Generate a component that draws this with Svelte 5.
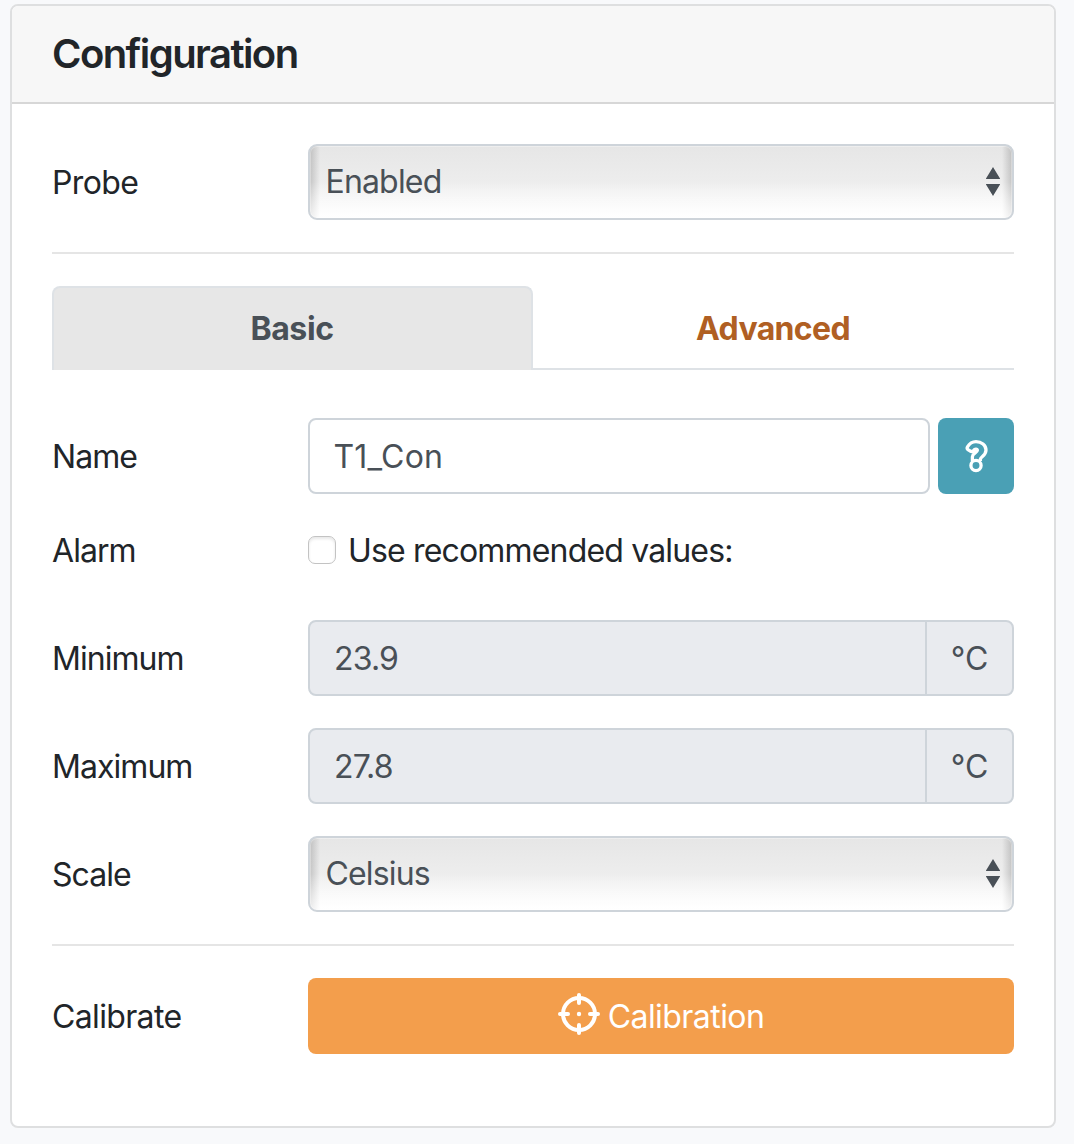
<script>
  let recommended = $state(false);
  let tab = $state('Basic');
  const limits = [
    { label: 'Minimum', value: '23.9' },
    { label: 'Maximum', value: '27.8' }
  ];
</script>

{#snippet picker(value)}
  <button class="select">
    <span>{value}</span>
    <svg class="arrows" viewBox="0 0 14 29" width="14" height="29" aria-hidden="true">
      <path d="M7 0 14.3 12H-.3zM-.3 17h14.6L7 29z" fill="#495057" />
    </svg>
  </button>
{/snippet}

<main class="page">
  <section class="card">
    <header><h1>Configuration</h1></header>
    <div class="body">
      <div class="row">
        <span class="label">Probe</span>
        {@render picker('Enabled')}
      </div>
      <hr />
      <nav class="tabs">
        {#each ['Basic', 'Advanced'] as name}
          <button class="tab" class:active={tab === name} onclick={() => (tab = name)}>{name}</button>
        {/each}
      </nav>
      <div class="row name">
        <span class="label tight">Name</span>
        <div class="field">T1_Con</div>
        <button class="help" aria-label="Help">
          <svg viewBox="0 0 24 34" width="24" height="34" fill="none" stroke="#fff" stroke-width="3.3" stroke-linejoin="round">
            <path d="M8.4 22V17.8C8.4 14.4 13.4 13.2 13.4 11.2C13.4 9.6 10.8 9.9 9.4 11.6Q8 13 6.4 12.2L3.9 10.6Q2.6 9.3 3.5 7.8C5.6 4.2 8.4 2.6 12 2.6C17.4 2.6 22 6.2 22 11C22 16.6 16.8 17.4 16.4 20V22" />
            <circle cx="12" cy="26.5" r="5.1" />
          </svg>
        </button>
      </div>
      <div class="row alarm">
        <span class="label tight">Alarm</span>
        <label class="check"><input type="checkbox" bind:checked={recommended} /><span>Use recommended values:</span></label>
      </div>
      {#each limits as item}
        <div class="row limit">
          <span class="label tight">{item.label}</span>
          <div class="group">
            <div class="value">{item.value}</div>
            <div class="unit">°C</div>
          </div>
        </div>
      {/each}
      <div class="row">
        <span class="label tight">Scale</span>
        {@render picker('Celsius')}
      </div>
      <hr />
      <div class="row">
        <span class="label">Calibrate</span>
        <button class="calibrate">
          <svg viewBox="0 0 42 42" width="42" height="42" fill="none" stroke="#fff" stroke-width="4" aria-hidden="true">
            <circle cx="21" cy="21" r="16" />
            <path d="M21 2v8M21 32v8M2 21h8M32 21h8" stroke-linecap="round" />
            <circle cx="21" cy="21" r="2.2" fill="#fff" stroke="none" />
          </svg>
          <span>Calibration</span>
        </button>
      </div>
    </div>
  </section>
</main>

<style>
  :global(body) {
    background: #f8f9fb;
  }
  .page {
    box-sizing: border-box;
    height: 1144px;
    padding: 4px 18px 16px 10px;
    font-family: Inter, sans-serif;
    font-size: 32px;
    line-height: 48px;
    letter-spacing: -0.83px;
    color: #212529;
  }
  .page * {
    box-sizing: border-box;
  }
  .page button {
    font: inherit;
    letter-spacing: inherit;
    margin: 0;
    cursor: pointer;
  }
  .card {
    height: 1124px;
    background: #fff;
    border: 2px solid #dedfe0;
    border-radius: 8px;
    overflow: hidden;
  }
  header {
    height: 98px;
    padding: 24px 40px;
    background: #f7f7f7;
    border-bottom: 2px solid #d7d7d7;
  }
  h1 {
    margin: 0;
    font-size: 40px;
    line-height: 48px;
    font-weight: 600;
    letter-spacing: -1.57px;
  }
  .body {
    padding: 40px;
  }
  .row {
    display: flex;
    align-items: center;
    height: 76px;
  }
  .label {
    width: 256px;
    flex: none;
    padding-top: 2px;
    letter-spacing: -0.65px;
  }
  .label.tight {
    letter-spacing: -0.95px;
  }
  hr {
    height: 2px;
    margin: 32px 0;
    border: 0;
    background: #e5e5e5;
  }
  .page .select {
    flex: 1;
    display: flex;
    align-items: center;
    justify-content: space-between;
    height: 76px;
    padding: 0 12px 0 15.5px;
    border: 2px solid #ced4da;
    border-radius: 9px;
    color: #495057;
    background:
      linear-gradient(#fff0 50%, #fff9),
      linear-gradient(to right, #0000002b, #0000 10px, #0000 calc(100% - 10px), #0000002b),
      linear-gradient(#e6e6e6, #ededed 50%, #fff);
    box-shadow: inset 0 0 0 1px #fff5;
  }
  .arrows {
    margin-bottom: 1px;
  }
  .tabs {
    display: flex;
    height: 84px;
    border-bottom: 2px solid #dee2e6;
  }
  .page .tab {
    flex: 1;
    height: 84px;
    padding: 0 1px 0 0;
    border: 2px solid transparent;
    border-bottom: 0;
    border-radius: 8px 8px 0 0;
    background: none;
    color: #b05f23;
    font-weight: 700;
    letter-spacing: -0.65px;
  }
  .page .tab.active {
    color: #495057;
    background: #e7e7e7;
    border-color: #dee2e6;
    letter-spacing: -0.4px;
  }
  .name {
    margin-top: 48px;
  }
  .field {
    flex: 1;
    height: 76px;
    padding: 13px 23.5px;
    border: 2px solid #ced4da;
    border-radius: 8px;
    color: #495057;
    letter-spacing: 0.2px;
  }
  .page .help {
    display: grid;
    place-items: center;
    width: 76px;
    height: 76px;
    margin-left: 8px;
    padding: 0;
    border: 0;
    border-radius: 8px;
    background: #4aa0b5;
  }
  .alarm {
    height: 48px;
    margin: 32px 0 46px;
  }
  .check {
    display: flex;
    align-items: center;
    gap: 12px;
  }
  .check span {
    padding-top: 2px;
  }
  .check input {
    appearance: none;
    width: 28px;
    height: 28px;
    margin: 0;
    border: 1px solid #c3c3c3;
    border-radius: 7px;
    background: #fff;
    box-shadow: inset 0 2px 3px #e8e8e8;
  }
  .limit {
    margin-bottom: 32px;
  }
  .group {
    flex: 1;
    display: flex;
    height: 76px;
    border: 2px solid #ced4da;
    border-radius: 8px;
    background: #e9ebef;
    color: #495057;
  }
  .value {
    flex: 1;
    padding: 13px 24px;
  }
  .unit {
    width: 87px;
    padding: 13px 0;
    border-left: 2px solid #ced4da;
    text-align: center;
    letter-spacing: 0;
  }
  .page .calibrate {
    flex: 1;
    display: flex;
    align-items: center;
    justify-content: center;
    gap: 8px;
    height: 76px;
    padding: 0;
    border: 0;
    border-radius: 8px;
    background: #f39e4c;
    color: #fff;
    letter-spacing: -0.55px;
  }
  .calibrate span {
    padding-top: 2px;
  }
  .calibrate svg {
    margin-bottom: 4px;
  }
</style>
